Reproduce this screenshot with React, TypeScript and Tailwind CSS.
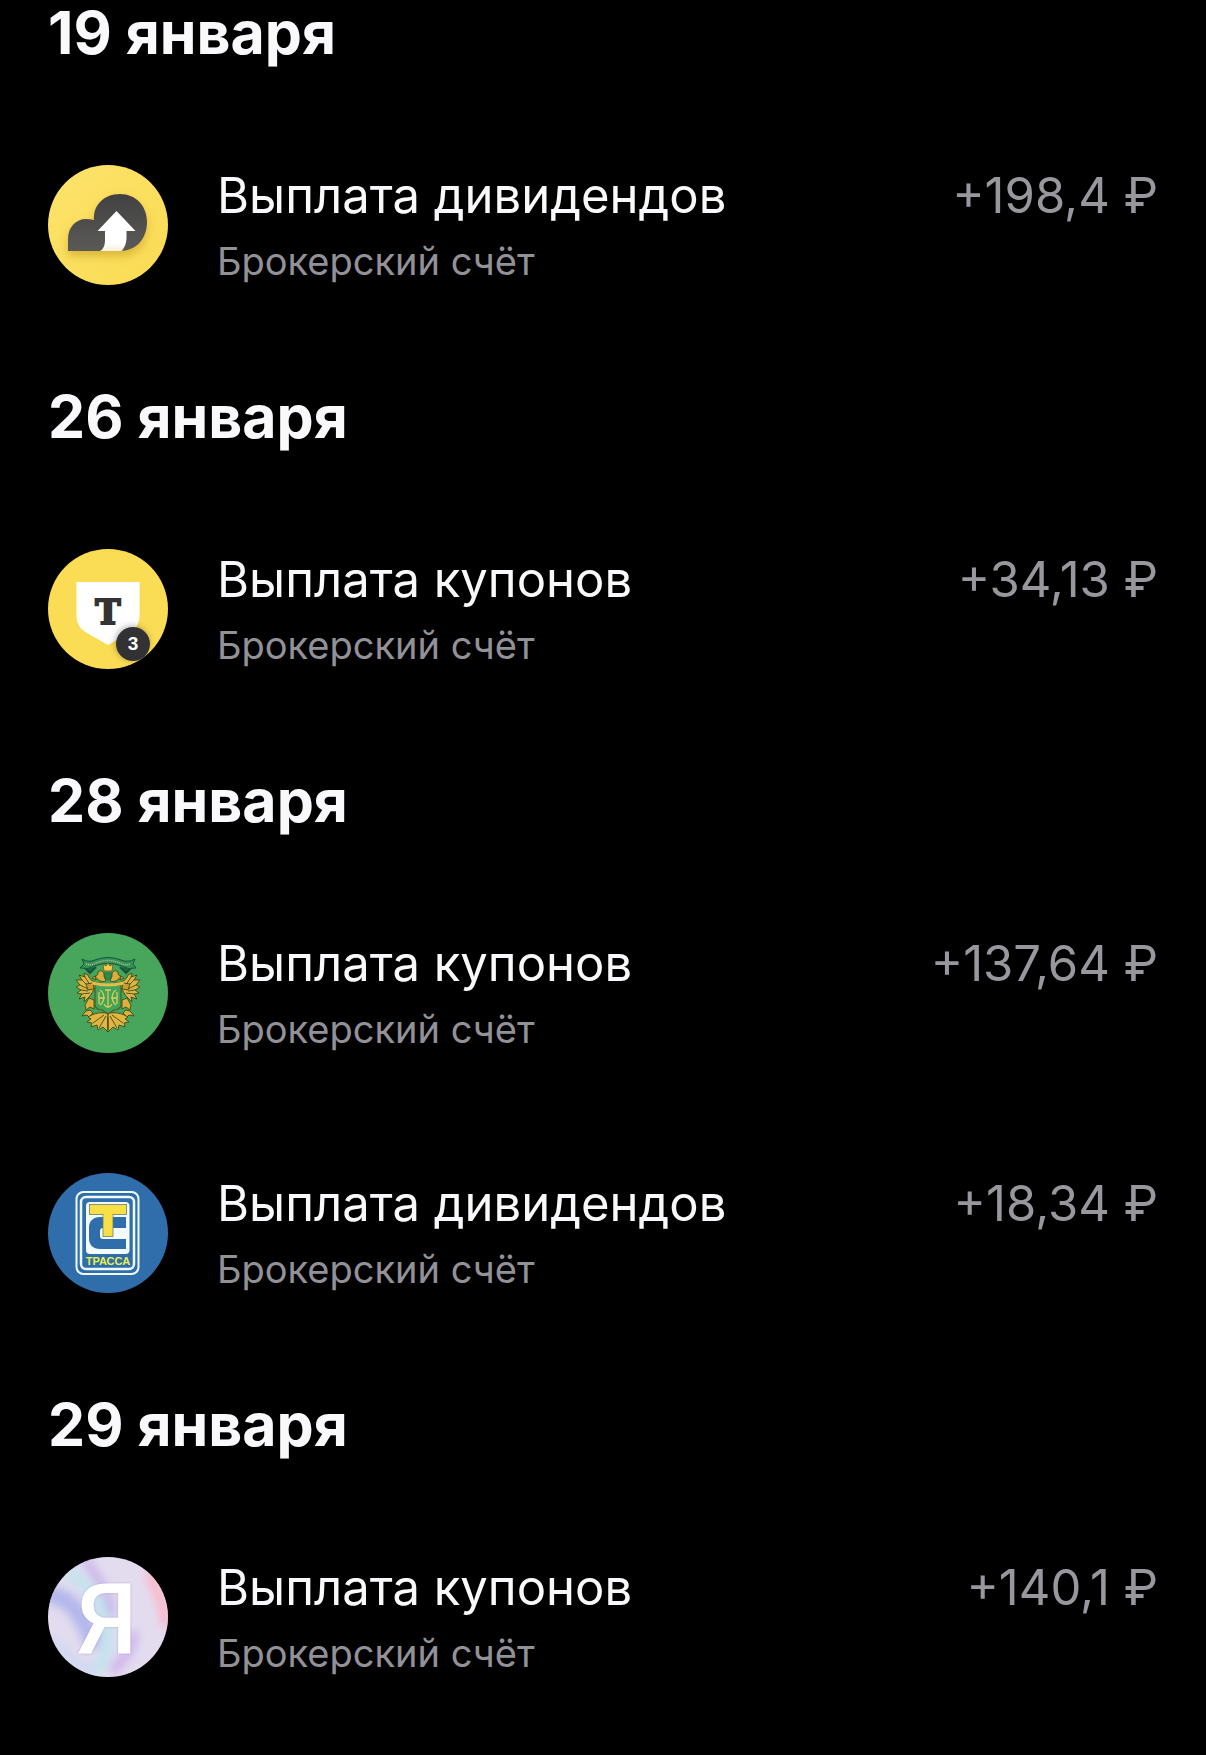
import React from 'react';

interface Payment {
  id: number;
  title: string;
  account: string;
  amount: string;
  icon: React.ReactNode;
}

interface PaymentDay {
  date: string;
  payments: Payment[];
}

const CloudLogo: React.FC = () => (
  <svg viewBox="0 0 120 120" className="size-full" aria-hidden="true">
    <defs>
      <linearGradient id="cloudFill" x1="0" y1="0" x2="0" y2="1">
        <stop offset="0" stopColor="#414141" />
        <stop offset="1" stopColor="#5b5a57" />
      </linearGradient>
      <linearGradient id="cloudBack" x1="0" y1="0" x2="1" y2="1">
        <stop offset="0" stopColor="#fce36c" />
        <stop offset="1" stopColor="#fadb52" />
      </linearGradient>
      <linearGradient id="arrowFill" x1="0" y1="0" x2="0" y2="1">
        <stop offset="0.8" stopColor="#ffffff" />
        <stop offset="1" stopColor="#f6eedc" />
      </linearGradient>
      <filter id="cloudShadow" x="-30%" y="-30%" width="160%" height="170%">
        <feDropShadow dx="0" dy="5" stdDeviation="5" floodColor="#a67c00" floodOpacity="0.4" />
      </filter>
    </defs>
    <circle cx="60" cy="60" r="60" fill="url(#cloudBack)" />
    <path
      d="M20 86V74C20 62 28 54 38 54Q42 54 46 55C45 40 56 29 72 29C88 29 99 41 99 57C99 74 88 86 72 86Z"
      fill="url(#cloudFill)"
      filter="url(#cloudShadow)"
    />
    <path d="M68.500 46L87.500 66H78.500V72C78.500 78 77 82 73.500 86H52C55.500 84 57 80 57 75V66H49.500Z" fill="url(#arrowFill)" />
  </svg>
);

const ShieldLogo: React.FC = () => (
  <svg viewBox="0 0 120 120" className="size-full" aria-hidden="true">
    <defs>
      <filter id="badgeShadow" x="-50%" y="-50%" width="200%" height="200%">
        <feDropShadow dx="-1" dy="-1" stdDeviation="3" floodColor="#000000" floodOpacity="0.3" />
      </filter>
    </defs>
    <circle cx="60" cy="60" r="60" fill="#fbdc55" />
    <path d="M28.500 33H91.500V66C91.500 75 88 80 81 84L60 96L39 84C32 80 28.500 75 28.500 66Z" fill="#ffffff" />
    <text
      x="60"
      y="75"
      textAnchor="middle"
      fontFamily="'DejaVu Serif', serif"
      fontWeight="700"
      fontSize="34"
      fill="#333333"
      stroke="#333333"
      strokeWidth="2"
    >
      T
    </text>
    <circle cx="85" cy="95" r="17" fill="#333335" filter="url(#badgeShadow)" />
    <text x="85" y="101" textAnchor="middle" fontFamily="'Liberation Sans', sans-serif" fontWeight="700" fontSize="19" fill="#ffffff">
      3
    </text>
  </svg>
);

// One half of the coat of arms, the other one is mirrored
const EagleHalf: React.FC = () => (
  <g stroke="#3d4a1a" strokeWidth="0.900" strokeLinejoin="round">
    <path d="M58 48C54 50 49 47 47 43C49 43 50 42 50 39C53 36 57 39 56 43Z" fill="#d9ae3a" />
    <path d="M47 43L44 45L48 47Z" fill="#d9ae3a" />
    <path d="M54 50C48 51 42 48 40 42L36 40L37 44L31 42L34 47L28 47L32 52L28 54L33 57L29 60L34 61L31 66L37 64L36 69L42 63L47 55Z" fill="#e0b540" />
    <path d="M37 44L42 52M34 47L41 54M32 52L40 56M33 57L40 58M34 61L42 60" fill="none" />
    <path d="M38 51L45 50L46 56L40 57Z" fill="#c89a30" />
    <path d="M41 65L46 67L46 76L42 74L38 77L37 72Z" fill="#dcb03c" />
    <path d="M38 78L42 77L45 80L41 84L39 82L34 83L37 79Z" fill="#dcb03c" />
    <path d="M58 80C50 79 45 81 40 84L43 86L39 89L44 90L43 94L49 92L50 97L55 94L60 99V80Z" fill="#e0b540" />
    <path d="M56 82L45 90M58 83L51 95M60 84V97" fill="none" />
  </g>
);

const EagleLogo: React.FC = () => (
  <svg viewBox="0 0 120 120" className="size-full" aria-hidden="true">
    <circle cx="60" cy="60" r="60" fill="#48a55c" />
    <path d="M37 35L42 40L48 34M83 35L78 40L72 34" fill="#176a43" stroke="#14583a" strokeWidth="2" />
    <path
      d="M34 26Q40 30 47 27Q60 22 73 27Q80 30 87 26L85 31L88 35Q80 37 74 33Q60 28 46 33Q40 37 32 35L36 31Z"
      fill="#37915a"
      stroke="#14583a"
      strokeWidth="1"
    />
    <path d="M38 31Q43 33 48 30Q60 25 72 30Q77 33 82 31" fill="none" stroke="#b5c98c" strokeWidth="1.500" strokeDasharray="1 1" />
    <EagleHalf />
    <g transform="translate(120 0) scale(-1 1)">
      <EagleHalf />
    </g>
    <path d="M55 31L58 33L60 30L62 33L65 31L64 38H56Z" fill="#f3c94b" stroke="#6a5a1e" strokeWidth="0.800" />
    <path d="M56 40H64L63 45L60 47L57 45Z" fill="#2f8a4e" stroke="#26693a" strokeWidth="0.800" />
    <path d="M47 52H73V73Q71 77 66 77L60 81L54 77Q49 77 47 73Z" fill="#42a45a" stroke="#4d5c20" strokeWidth="1.200" />
    <path d="M44 50Q60 54 76 50" fill="none" stroke="#e6bd49" strokeWidth="3" />
    <path
      d="M60 57V74M57 57H63M52 57C57 60 57 68 52 72M68 57C63 60 63 68 68 72M51 59V71M69 59V71M51 65H57M63 65H69M56 71C58 75 62 75 64 71"
      fill="none"
      stroke="#dccb55"
      strokeWidth="1.300"
    />
  </svg>
);

const RoadLogo: React.FC = () => (
  <svg viewBox="0 0 120 120" className="size-full" aria-hidden="true">
    <circle cx="60" cy="60" r="60" fill="#2f6eab" />
    <g fill="none" stroke="#eefaff">
      <rect x="28.500" y="19" width="62" height="82" rx="7" strokeWidth="2" />
      <rect x="33" y="24" width="53" height="72" rx="5" strokeWidth="2.500" />
    </g>
    <rect x="38" y="29" width="43.500" height="52" rx="4" fill="#f4fbff" />
    <path d="M78 44H52C45 44 41 48 41 55V65C41 72 45 76 52 76H78V66H55Q52 66 52 63V58Q52 55 55 55H78Z" fill="#2f6eab" />
    <g fill="#f8df45" stroke="#5f7f72" strokeWidth="0.800">
      <rect x="55" y="38" width="10" height="25.500" />
      <rect x="41.500" y="31.500" width="37" height="10" />
    </g>
    <rect x="55.500" y="39" width="9" height="5" fill="#f8df45" />
    <text
      x="60"
      y="92"
      textAnchor="middle"
      fontFamily="'Liberation Sans', sans-serif"
      fontWeight="700"
      fontSize="11"
      fill="#eaf04e"
    >
      ТРАССА
    </text>
  </svg>
);

const HoloLogo: React.FC = () => (
  <svg viewBox="0 0 120 120" className="size-full overflow-visible" aria-hidden="true">
    <defs>
      <clipPath id="holoClip">
        <circle cx="60" cy="60" r="60" />
      </clipPath>
      <filter id="holoBlur" x="-40%" y="-40%" width="180%" height="180%">
        <feGaussianBlur stdDeviation="5" />
      </filter>
      <filter id="letterShadow" x="-20%" y="-20%" width="140%" height="140%">
        <feDropShadow dx="0" dy="0" stdDeviation="1" floodColor="#8d84b8" floodOpacity="0.6" />
      </filter>
    </defs>
    <g clipPath="url(#holoClip)">
      <rect width="120" height="120" fill="#e3dcef" />
      <g filter="url(#holoBlur)" fill="none" strokeLinecap="round">
        <path d="M2 38C24 40 36 62 44 84" stroke="#b3b6ec" strokeWidth="17" />
        <path d="M22 16C40 28 52 44 58 66S58 96 50 112" stroke="#c2e4ee" strokeWidth="12" />
        <path d="M38 4C50 22 60 34 64 56" stroke="#c5abe8" strokeWidth="7" />
        <path d="M86 78C84 92 76 102 66 112" stroke="#cdb0ec" strokeWidth="9" />
        <path d="M6 84C16 96 26 106 42 112" stroke="#c9d8f2" strokeWidth="8" />
        <path d="M102 18C110 34 116 50 118 66" stroke="#ffb2c2" strokeWidth="9" />
      </g>
    </g>
    <text
      x="59"
      y="96"
      textAnchor="middle"
      fontFamily="Roboto, sans-serif"
      fontWeight="500"
      fontSize="98"
      fill="#ffffff"
      filter="url(#letterShadow)"
    >
      Я
    </text>
  </svg>
);

const days: PaymentDay[] = [
  {
    date: '19 января',
    payments: [
      { id: 1, title: 'Выплата дивидендов', account: 'Брокерский счёт', amount: '+198,4 ₽', icon: <CloudLogo /> },
    ],
  },
  {
    date: '26 января',
    payments: [
      { id: 2, title: 'Выплата купонов', account: 'Брокерский счёт', amount: '+34,13 ₽', icon: <ShieldLogo /> },
    ],
  },
  {
    date: '28 января',
    payments: [
      { id: 3, title: 'Выплата купонов', account: 'Брокерский счёт', amount: '+137,64 ₽', icon: <EagleLogo /> },
      { id: 4, title: 'Выплата дивидендов', account: 'Брокерский счёт', amount: '+18,34 ₽', icon: <RoadLogo /> },
    ],
  },
  {
    date: '29 января',
    payments: [
      { id: 5, title: 'Выплата купонов', account: 'Брокерский счёт', amount: '+140,1 ₽', icon: <HoloLogo /> },
    ],
  },
];

const PaymentRow: React.FC<{ payment: Payment }> = ({ payment }) => (
  <li className="flex items-center gap-[49px] py-[55px]">
    <div className="size-[120px] shrink-0">{payment.icon}</div>
    <div className="min-w-0 flex-1">
      <div className="flex justify-between gap-6 text-[49px] leading-[72px]">
        <h3>{payment.title}</h3>
        <span className="whitespace-nowrap text-[#98979e]">{payment.amount}</span>
      </div>
      <p className="text-[38px] leading-[58px] text-[#929197]">{payment.account}</p>
    </div>
  </li>
);

export default function App() {
  return (
    <main className="flex min-h-screen flex-col gap-[39px] bg-black px-12 font-['Inter',sans-serif] text-[#f9f9fb]">
      {days.map((day) => (
        <section key={day.date}>
          <h2 className="pb-[39px] text-[59px] leading-[66px] font-bold">{day.date}</h2>
          <ul>
            {day.payments.map((payment) => (
              <PaymentRow key={payment.id} payment={payment} />
            ))}
          </ul>
        </section>
      ))}
    </main>
  );
}
